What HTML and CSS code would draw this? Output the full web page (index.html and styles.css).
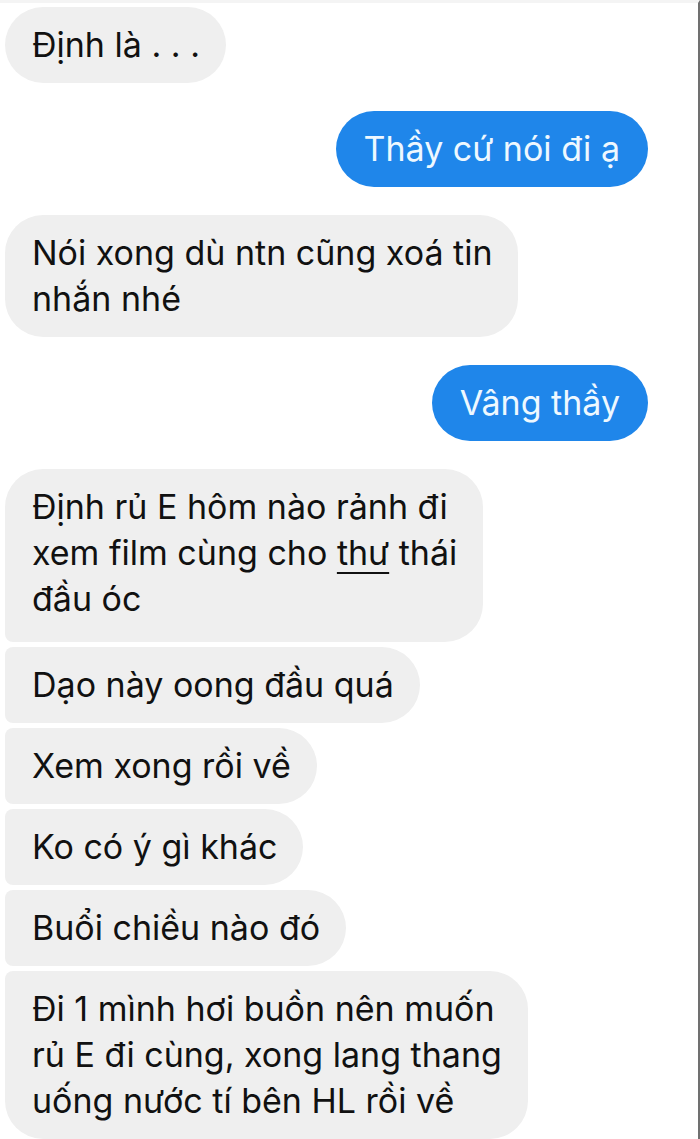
FILE: index.html
```html
<!DOCTYPE html>
<html lang="vi">
<head>
<meta charset="utf-8">
<title>Tin nhắn</title>
<link rel="stylesheet" href="styles.css">
</head>
<body>
<div class="chat">
  <div class="group in">
    <div class="bubble">Định là . . .</div>
  </div>
  <div class="group out">
    <div class="bubble">Thầy cứ nói đi ạ</div>
  </div>
  <div class="group in">
    <div class="bubble">Nói xong dù ntn cũng xoá tin<br>nhắn nhé</div>
  </div>
  <div class="group out">
    <div class="bubble">Vâng thầy</div>
  </div>
  <div class="group in stack">
    <div class="bubble">Định rủ E hôm nào rảnh đi<br>xem film cùng cho <span class="ul">thư</span> thái<br>đầu óc</div>
    <div class="bubble">Dạo này oong đầu quá</div>
    <div class="bubble">Xem xong rồi về</div>
    <div class="bubble">Ko có ý gì khác</div>
    <div class="bubble">Buổi chiều nào đó</div>
    <div class="bubble">Đi 1 mình hơi buồn nên muốn<br>rủ E đi cùng, xong lang thang<br>uống nước tí bên HL rồi về</div>
  </div>
</div>
</body>
</html>
```
FILE: styles.css
```css
html, body {
  margin: 0;
  padding: 0;
  background: #ffffff;
}
body {
  font-family: "Inter", "Liberation Sans", Arial, sans-serif;
  font-size: 34px;
  line-height: 46px;
  color: #111111;
  height: 1139px;
  overflow: hidden;
  border-top: 3px solid #f4f4f4;
  box-sizing: border-box;
  border-right: 2px solid #707070;
}
.chat {
  display: flex;
  flex-direction: column;
  gap: 28px;
  padding: 4px 50px 0 5px;
}
.group {
  display: flex;
  flex-direction: column;
  gap: 5px;
}
.group.in {
  align-items: flex-start;
}
.group.out {
  align-items: flex-end;
}
.bubble {
  padding: 15px 26px 15px 27px;
  border-radius: 38px;
  background: #efefef;
  white-space: nowrap;
}
.out .bubble {
  background: #1f86ea;
  color: #eef8ff;
  padding: 15px 28px;
}
.stack .bubble {
  border-radius: 8px 38px 38px 8px;
}
.stack .bubble:first-child {
  border-top-left-radius: 38px;
  padding-bottom: 20px;
}
.stack .bubble:last-child {
  border-bottom-left-radius: 38px;
}
.ul {
  text-decoration: underline;
  text-decoration-thickness: 2px;
  text-underline-offset: 7px;
}
```
